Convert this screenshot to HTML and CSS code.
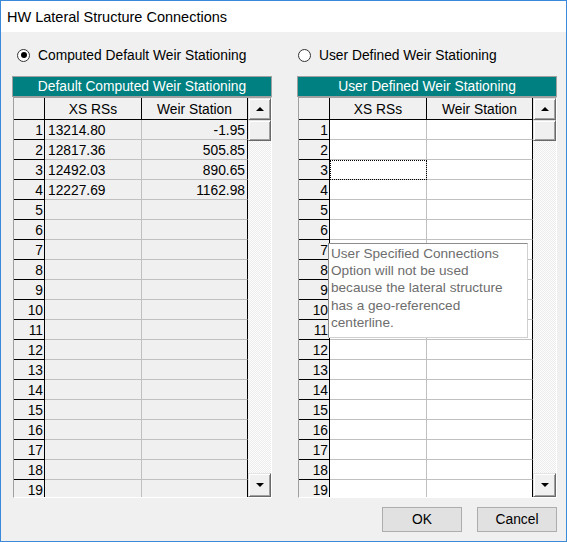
FILE: index.html
```html
<!DOCTYPE html>
<html>
<head>
<meta charset="utf-8">
<title>HW Lateral Structure Connections</title>
<link rel="stylesheet" href="styles.css">
</head>
<body>
<div class="win">
  <div class="titlebar">HW Lateral Structure Connections</div>
  <div class="body">
    <div class="cols">
      <section class="col">
        <div class="radio"><span class="dot on"></span><span class="rlabel">Computed Default Weir Stationing</span></div>
        <div class="caption">Default Computed Weir Stationing</div>
        <div class="grid ro">
          <div class="cells">
            <div class="h rh"></div><div class="h">XS RSs</div><div class="h last">Weir Station</div>
            <div class="rh">1</div><div class="c">13214.80</div><div class="c num last">-1.95</div>
            <div class="rh">2</div><div class="c">12817.36</div><div class="c num last">505.85</div>
            <div class="rh">3</div><div class="c">12492.03</div><div class="c num last">890.65</div>
            <div class="rh">4</div><div class="c">12227.69</div><div class="c num last">1162.98</div>
            <div class="rh">5</div><div class="c"></div><div class="c last"></div>
            <div class="rh">6</div><div class="c"></div><div class="c last"></div>
            <div class="rh">7</div><div class="c"></div><div class="c last"></div>
            <div class="rh">8</div><div class="c"></div><div class="c last"></div>
            <div class="rh">9</div><div class="c"></div><div class="c last"></div>
            <div class="rh">10</div><div class="c"></div><div class="c last"></div>
            <div class="rh">11</div><div class="c"></div><div class="c last"></div>
            <div class="rh">12</div><div class="c"></div><div class="c last"></div>
            <div class="rh">13</div><div class="c"></div><div class="c last"></div>
            <div class="rh">14</div><div class="c"></div><div class="c last"></div>
            <div class="rh">15</div><div class="c"></div><div class="c last"></div>
            <div class="rh">16</div><div class="c"></div><div class="c last"></div>
            <div class="rh">17</div><div class="c"></div><div class="c last"></div>
            <div class="rh">18</div><div class="c"></div><div class="c last"></div>
            <div class="rh">19</div><div class="c"></div><div class="c last"></div>
          </div>
          <div class="scroll">
            <div class="sbtn up"><span class="arr-up"></span></div>
            <div class="sbtn thumb"></div>
            <div class="track"></div>
            <div class="sbtn down"><span class="arr-down"></span></div>
          </div>
        </div>
      </section>
      <section class="col">
        <div class="radio radio-right"><span class="dot"></span><span class="rlabel">User Defined Weir Stationing</span></div>
        <div class="caption">User Defined Weir Stationing</div>
        <div class="grid rw">
          <div class="cells">
            <div class="h rh"></div><div class="h">XS RSs</div><div class="h last">Weir Station</div>
            <div class="rh">1</div><div class="c"></div><div class="c last"></div>
            <div class="rh">2</div><div class="c"></div><div class="c last"></div>
            <div class="rh">3</div><div class="c focus"></div><div class="c last"></div>
            <div class="rh">4</div><div class="c"></div><div class="c last"></div>
            <div class="rh">5</div><div class="c"></div><div class="c last"></div>
            <div class="rh">6</div><div class="c"></div><div class="c last"></div>
            <div class="rh">7</div><div class="c"></div><div class="c last"></div>
            <div class="rh">8</div><div class="c"></div><div class="c last"></div>
            <div class="rh">9</div><div class="c"></div><div class="c last"></div>
            <div class="rh">10</div><div class="c"></div><div class="c last"></div>
            <div class="rh">11</div><div class="c"></div><div class="c last"></div>
            <div class="rh">12</div><div class="c"></div><div class="c last"></div>
            <div class="rh">13</div><div class="c"></div><div class="c last"></div>
            <div class="rh">14</div><div class="c"></div><div class="c last"></div>
            <div class="rh">15</div><div class="c"></div><div class="c last"></div>
            <div class="rh">16</div><div class="c"></div><div class="c last"></div>
            <div class="rh">17</div><div class="c"></div><div class="c last"></div>
            <div class="rh">18</div><div class="c"></div><div class="c last"></div>
            <div class="rh">19</div><div class="c"></div><div class="c last"></div>
          </div>
          <div class="scroll">
            <div class="sbtn up"><span class="arr-up"></span></div>
            <div class="sbtn thumb"></div>
            <div class="track"></div>
            <div class="sbtn down"><span class="arr-down"></span></div>
          </div>
          <div class="tip">User Specified Connections<br>Option will not be used<br>because the lateral structure<br>has a geo-referenced<br>centerline.</div>
        </div>
      </section>
    </div>
    <div class="actions">
      <button class="btn">OK</button>
      <button class="btn">Cancel</button>
    </div>
  </div>
</div>
</body>
</html>
```

FILE: styles.css
```css
* { box-sizing: border-box; }
html, body { margin: 0; padding: 0; background: #f0f0f0; }
body {
  font-family: "Liberation Sans", Arial, sans-serif;
  font-size: 13.8px;
  color: #000;
}
.win {
  width: 567px;
  height: 542px;
  border: 1px solid #3b8ad9;
  background: #f0f0f0;
  display: flex;
  flex-direction: column;
}
.titlebar {
  height: 31px;
  background: #fff;
  font-size: 14.5px;
  line-height: 32px;
  padding-left: 6px;
  color: #000;
}
.body {
  padding: 12px 9px 9px 11px;
  display: flex;
  flex-direction: column;
}
.cols {
  display: flex;
  gap: 25px;
}
.col {
  width: 260px;
  display: flex;
  flex-direction: column;
}
.radio {
  height: 22px;
  display: flex;
  align-items: center;
  padding-left: 5px;
  margin-bottom: 10px;
}
.radio-right { padding-left: 1px; }
.dot {
  width: 13px;
  height: 13px;
  border: 1px solid #333;
  border-radius: 50%;
  background: #fff;
  display: flex;
  align-items: center;
  justify-content: center;
}
.dot.on::after {
  content: "";
  width: 6px;
  height: 6px;
  border-radius: 50%;
  background: #000;
}
.rlabel { margin-left: 8px; }
.caption {
  height: 21px;
  background: #008080;
  border: 1px solid #a0a0a0;
  color: #fff;
  text-align: center;
  line-height: 20px;
}
.grid {
  position: relative;
  margin-left: 1px;
  height: 401px;
  border-style: solid;
  border-width: 1px;
  border-color: #a0a0a0 #fff #fff #a0a0a0;
  display: flex;
}
.cells {
  display: grid;
  grid-template-columns: 31px 97px 106px;
  grid-template-rows: 22px;
  grid-auto-rows: 20px;
  overflow: hidden;
  height: 399px;
  align-content: start;
}
.cells > div {
  line-height: 21px;
  white-space: nowrap;
  overflow: hidden;
}
.h {
  background: #f0f0f0;
  border-right: 1px solid #000;
  border-bottom: 1px solid #000;
  text-align: center;
  line-height: 23px !important;
}
.rh {
  background: #f0f0f0;
  border-right: 1px solid #000;
  border-bottom: 1px solid #000;
  text-align: right;
  padding-right: 1px;
}
.c {
  border-right: 1px solid #c0c0c0;
  border-bottom: 1px solid #c0c0c0;
  padding-left: 3px;
}
.c.last { border-right-color: #000; }
.c.num { text-align: right; padding-right: 2px; }
.ro .c { background: #f0f0f0; }
.rw .c { background: #fff; }
.c.focus {
  outline: 1px dotted #000;
  outline-offset: -1px;
}
.scroll {
  width: 23px;
  display: flex;
  flex-direction: column;
}
.sbtn {
  background: #f0f0f0;
  border-style: solid;
  border-width: 1px;
  border-color: #e3e3e3 #696969 #696969 #e3e3e3;
  box-shadow: inset 1px 1px #fff, inset -1px -1px #a0a0a0;
  display: flex;
  align-items: center;
  justify-content: center;
}
.up { height: 22px; }
.thumb { height: 21px; }
.down { height: 24px; }
.track {
  flex: 1;
  background: repeating-conic-gradient(#fdfdfd 0 25%, #ececec 0 50%) 0 0 / 2px 2px;
}
.arr-up {
  width: 0; height: 0;
  border-left: 4px solid transparent;
  border-right: 4px solid transparent;
  border-bottom: 4px solid #000;
}
.arr-down {
  width: 0; height: 0;
  border-left: 4px solid transparent;
  border-right: 4px solid transparent;
  border-top: 4px solid #000;
}
.tip {
  position: absolute;
  left: 29px;
  top: 145px;
  width: 200px;
  height: 95px;
  background: #fff;
  border-style: solid;
  border-width: 1px;
  border-color: #8c8c8c #d0d0d0 #d0d0d0 #8c8c8c;
  color: #6d6d6d;
  font-size: 13.6px;
  line-height: 17.2px;
  padding: 1px 0 0 2px;
}
.actions {
  margin-top: 9px;
  display: flex;
  justify-content: flex-end;
  gap: 15px;
}
.btn {
  width: 80px;
  height: 25px;
  background: #e1e1e1;
  border: 1px solid #adadad;
  font-family: "Liberation Sans", Arial, sans-serif;
  font-size: 13.8px;
  color: #000;
  padding: 0;
}
```
